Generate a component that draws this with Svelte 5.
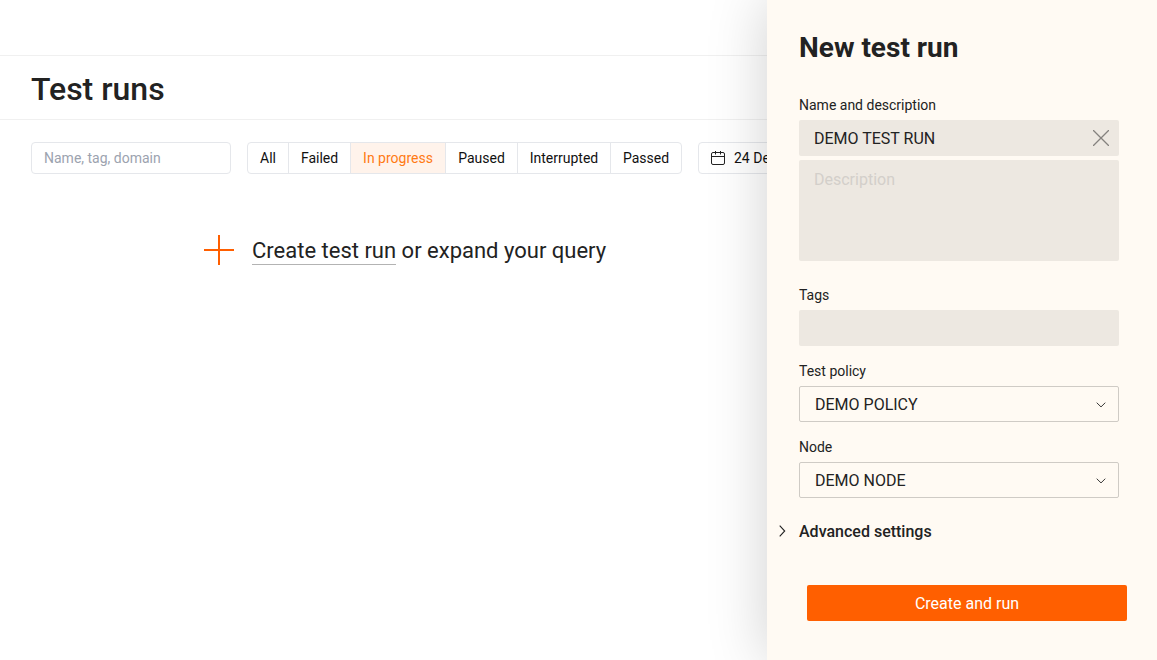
<script>
  const filters = [
    { label: 'All', width: 42 },
    { label: 'Failed', width: 63 },
    { label: 'In progress', width: 96 },
    { label: 'Paused', width: 73 },
    { label: 'Interrupted', width: 94 },
    { label: 'Passed', width: 72 }
  ];
  let active = $state('In progress');
  let name = $state('DEMO TEST RUN');
  const selects = [
    { label: 'Test policy', value: 'DEMO POLICY' },
    { label: 'Node', value: 'DEMO NODE' }
  ];
</script>

<div class="app">
  <main>
    <div class="topbar"></div>
    <header><h1>Test runs</h1></header>
    <div class="toolbar">
      <input class="search" placeholder="Name, tag, domain" />
      <div class="filters">
        {#each filters as f}
          <button class:active={active === f.label} style="width: {f.width}px" onclick={() => (active = f.label)}>{f.label}</button>
        {/each}
      </div>
      <button class="date">
        <svg width="14" height="14" viewBox="0 0 14 14" fill="none" stroke="#222" stroke-width="1">
          <rect x="0.5" y="1.5" width="13" height="12" rx="1.5" />
          <path d="M0.5 5.5h13M4.5 0v3.5M9.5 0v3.5" />
        </svg>
        <span>24 Dec</span>
      </button>
    </div>
    <div class="empty">
      <svg width="30" height="30" viewBox="0 0 30 30" stroke="#ff5f00" stroke-width="2"><path d="M15 0v30M0 15h30" /></svg>
      <p><span class="link">Create test run</span> or expand your query</p>
    </div>
  </main>

  <aside>
    <h2>New test run</h2>
    <div class="label">Name and description</div>
    <div class="name">
      <input bind:value={name} />
      <button class="clear" aria-label="Clear" onclick={() => (name = '')}>
        <svg width="16" height="16" viewBox="0 0 16 16" stroke="#85827e" stroke-width="1.3"><path d="M0 0l16 16M16 0L0 16" /></svg>
      </button>
    </div>
    <textarea placeholder="Description"></textarea>
    <div class="label tags-label">Tags</div>
    <div class="tags"></div>
    {#each selects as s}
      <div class="label select-label">{s.label}</div>
      <div class="select">
        <span>{s.value}</span>
        <svg width="10" height="6" viewBox="0 0 10 6" fill="none" stroke="#222" stroke-width="0.9"><path d="M0.7 0.7L5 4.900l4.300-4.200" /></svg>
      </div>
    {/each}
    <div class="advanced">
      <svg width="7" height="12" viewBox="0 0 7 12" fill="none" stroke="#222" stroke-width="1.1"><path d="M0.700 0.700L5.700 6L0.700 11.300" /></svg>
      <span>Advanced settings</span>
    </div>
    <button class="submit">Create and run</button>
  </aside>
</div>

<style>
  :global(body) { margin: 0; }
  .app, .app * { box-sizing: border-box; }
  .app {
    display: flex;
    width: 1157px;
    height: 660px;
    overflow: hidden;
    background: #fff;
    color: #222;
    font-family: Roboto, sans-serif;
  }
  button, input, textarea { font-family: inherit; margin: 0; }
  main { width: 767px; flex: none; }
  .topbar { height: 56px; border-bottom: 1px solid #f0f0f0; }
  header { height: 64px; padding-left: 31px; border-bottom: 1px solid #f0f0f0; }
  h1 { margin: 0; font-size: 32px; line-height: 66px; font-weight: 500; }
  .toolbar { display: flex; width: 860px; height: 32px; margin: 22px 0 0 31px; gap: 16px; }
  .search {
    width: 200px;
    height: 32px;
    padding: 0 12px;
    border: 1px solid #e5e7eb;
    border-radius: 4px;
    font-size: 14px;
    outline: none;
  }
  .search::placeholder { color: #9ca3af; opacity: 1; }
  .filters { display: flex; }
  .filters button {
    height: 32px;
    padding: 0;
    margin-right: -1px;
    border: 1px solid #e5e7eb;
    background: #fff;
    color: #111;
    font-size: 14px;
  }
  .filters button:first-child { border-radius: 4px 0 0 4px; }
  .filters button:last-child { border-radius: 0 4px 4px 0; margin-right: 0; }
  .filters button.active { background: #fff3eb; color: #ff7a14; }
  .date {
    display: flex;
    align-items: center;
    gap: 9px;
    width: 200px;
    padding: 0 12px;
    border: 1px solid #e5e7eb;
    border-radius: 4px;
    background: #fff;
    color: #111;
    font-size: 14px;
  }
  .empty { display: flex; align-items: center; gap: 18px; margin: 60px 0 0 204px; height: 32px; }
  .empty p { margin: 0; padding-top: 2px; font-size: 22px; line-height: 32px; white-space: nowrap; }
  .link { display: inline-block; height: 30px; border-bottom: 1px solid #b3b3b3; }
  aside {
    position: relative;
    flex: none;
    width: 390px;
    height: 660px;
    padding: 30px 38px 0 32px;
    background: #fffaf3;
    box-shadow: 0 0 56px rgba(0, 0, 0, 0.19);
  }
  h2 { margin: 0 0 30px; font-size: 28px; line-height: 36px; height: 36px; font-weight: 700; }
  .label { height: 24px; font-size: 14px; line-height: 18px; }
  .name { display: flex; align-items: center; height: 36px; padding: 0 10px 0 15px; background: #ede8e1; border-radius: 2px; }
  .name input { flex: 1; min-width: 0; padding: 0; border: 0; background: none; outline: none; color: #222; font-size: 16px; }
  .clear { display: flex; padding: 0; border: 0; background: none; }
  textarea {
    display: block;
    width: 320px;
    height: 101px;
    margin-top: 4px;
    padding: 10px 15px;
    border: 0;
    border-radius: 2px;
    background: #ede8e1;
    resize: none;
    outline: none;
    font-size: 16px;
    line-height: 20px;
  }
  textarea::placeholder { color: #d3cfca; opacity: 1; }
  .tags-label { margin-top: 25px; }
  .tags { height: 36px; border-radius: 2px; background: #ede8e1; }
  .select-label { margin-top: 16px; }
  .select {
    display: flex;
    align-items: center;
    justify-content: space-between;
    height: 36px;
    padding: 0 12px 0 15px;
    border: 1px solid #cfcbc5;
    border-radius: 2px;
    font-size: 16px;
  }
  .select svg { margin-top: 2px; }
  .advanced { display: flex; align-items: center; gap: 13px; height: 24px; margin: 21px 0 0 -20px; font-size: 16px; font-weight: 500; }
  .submit {
    display: block;
    width: 320px;
    height: 36px;
    margin: 42px 0 0 8px;
    padding: 0;
    border: 0;
    border-radius: 2px;
    background: #ff5f00;
    color: #fff;
    font-size: 16px;
  }
</style>
